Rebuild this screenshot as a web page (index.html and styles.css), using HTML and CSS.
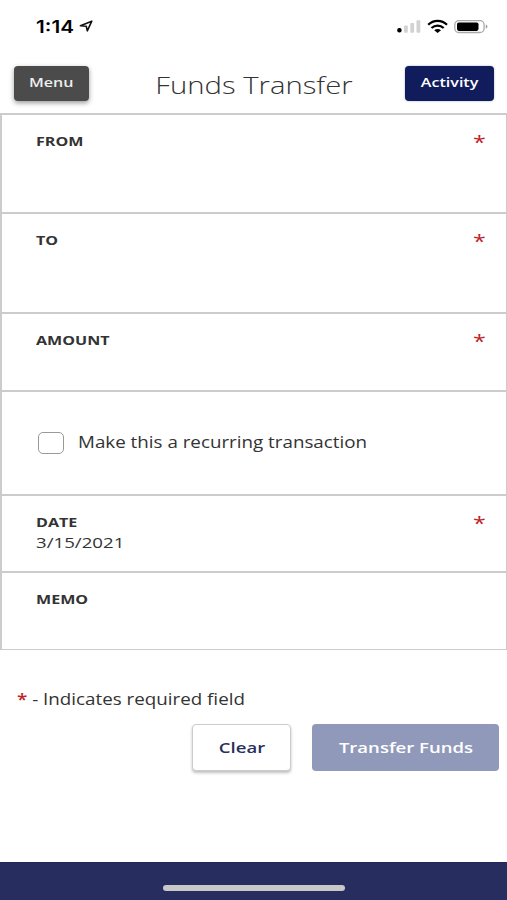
FILE: index.html
```html
<!DOCTYPE html>
<html lang="en">
<head>
<meta charset="utf-8">
<title>Funds Transfer</title>
<link rel="stylesheet" href="styles.css">
</head>
<body>
<div class="status">
  <span class="time wide">1:14</span>
  <svg class="arrow" width="15" height="13" viewBox="0 0 15 13"><path d="M1.400 5.800 12.800 1.200 8.300 10.800 7.300 6.300Z" fill="none" stroke="#111" stroke-width="1.600" stroke-linejoin="round"/></svg>
  <svg class="signals" width="94" height="16" viewBox="0 0 94 16">
    <rect x="2.200" y="9" width="4.400" height="4.600" rx="2" fill="#000"/>
    <g fill="#d2d2d2"><rect x="9" y="6.500" width="3.800" height="7.200" rx="1"/><rect x="15.300" y="4" width="3.800" height="9.700" rx="1"/><rect x="21.500" y="1.200" width="3.800" height="12.500" rx="1"/></g>
    <g fill="none" stroke="#000" stroke-width="2.300"><path d="M33.200 5.800C38.400 .600 46.800 .600 52 5.800"/><path d="M36.500 9C40 5.800 45.200 5.800 48.700 9"/></g>
    <path d="M39.200 11.200C41.200 9.500 44 9.500 46 11.200L42.600 14Z" fill="#000"/>
    <rect x="59.800" y="1.700" width="29.300" height="11.800" rx="4" fill="#fff" stroke="#aaa" stroke-width="1.300"/>
    <rect x="62" y="3.400" width="21.500" height="8.500" rx="1.800" fill="#000"/>
    <path d="M90.800 5.500V9.800Q92.400 9 92.400 7.600T90.800 5.500Z" fill="#999"/>
  </svg>
</div>
<header class="header">
  <button class="btn menu"><span class="wide">Menu</span></button>
  <h1 class="title"><span class="wide">Funds Transfer</span></h1>
  <button class="btn activity"><span class="wide">Activity</span></button>
</header>
<main>
  <div class="form">
    <section class="row from"><div class="label wide">FROM</div><span class="star wide">*</span></section>
    <section class="row to"><div class="label wide">TO</div><span class="star wide">*</span></section>
    <section class="row amount"><div class="label wide">AMOUNT</div><span class="star wide">*</span></section>
    <section class="row recurring"><span class="check"></span><span class="text wide">Make this a recurring transaction</span></section>
    <section class="row date"><div class="field"><div class="label wide">DATE</div><div class="value wide">3/15/2021</div></div><span class="star wide">*</span></section>
    <section class="row memo"><div class="label wide">MEMO</div></section>
  </div>
  <p class="note"><span class="wide"><b>*</b> - Indicates required field</span></p>
  <div class="actions">
    <button class="btn clear"><span class="wide">Clear</span></button>
    <button class="btn transfer"><span class="wide">Transfer Funds</span></button>
  </div>
</main>
<footer class="footer"><div class="home"></div></footer>
</body>
</html>
```
FILE: styles.css
```css
* { box-sizing: border-box; }
body {
  margin: 0;
  width: 507px;
  height: 900px;
  overflow: hidden;
  display: flex;
  flex-direction: column;
  background: #fff;
  color: #333;
  font-family: "Open Sans", sans-serif;
}
.wide {
  display: inline-block;
  white-space: nowrap;
  transform: scaleX(1.22);
  transform-origin: left center;
}
.btn .wide, .title .wide { transform-origin: center; }
.status { height: 66px; padding: 17px 18px 0 36px; display: flex; align-items: flex-start; }
.time { width: 43px; font: 600 17px/21px Inter, sans-serif; color: #000; }
.arrow { margin-top: 3px; }
.signals { margin: 2px 0 0 auto; }
.header { height: 47px; padding: 0 13px 0 14px; display: grid; grid-template-columns: 75px 1fr 89px; align-items: start; }
.btn {
  display: flex;
  justify-content: center;
  align-items: center;
  border: 0;
  padding: 0;
  border-radius: 4px;
  color: #fff;
  font: 600 13.200px/20px "Open Sans", sans-serif;
}
.menu { width: 75px; height: 35px; padding-bottom: 3px; background: #4b4b4b; color: #eee; box-shadow: 0 2px 5px rgba(0,0,0,.4); }
.activity { width: 89px; height: 35px; padding-bottom: 3px; background: #101c5c; box-shadow: 0 0 2px rgba(16,28,92,.4); }
.title { margin: 2px 0 0 13px; font-size: 24px; font-weight: 300; line-height: 34px; text-align: center; }
.form { border: 2px solid #ccc; border-right-width: 1px; border-bottom-width: 1px; height: 537px; display: flex; flex-direction: column; }
.row { display: flex; justify-content: space-between; align-items: flex-start; padding: 16px 23px 0 34px; border-bottom: 2px solid #ccc; }
.from { height: 99px; }
.to { height: 100px; }
.amount { height: 78px; }
.recurring { height: 104px; align-items: center; justify-content: flex-start; padding-top: 0; }
.date { height: 77px; }
.memo { height: 76px; border-bottom: 0; }
.label { font-size: 13.200px; font-weight: 700; line-height: 20px; }
.field { display: flex; flex-direction: column; align-items: flex-start; }
.value { font-size: 15.300px; line-height: 20px; }
.star { color: #bd2426; font-size: 19px; line-height: 23px; font-weight: 500; }
.check { width: 26px; height: 22px; border: 1px solid #999; border-radius: 5px; margin: 0 14px 0 2px; }
.text { font-size: 15.400px; line-height: 22px; }
.note { margin: 38px 0 0 17px; font-size: 15.400px; line-height: 24px; }
.note b { color: #bd2426; font-weight: 600; }
.actions { margin-top: 12px; padding-right: 8px; display: flex; justify-content: flex-end; gap: 20px; }
.actions .btn { height: 47px; font-size: 15.200px; padding-bottom: 2px; }
.actions .clear { width: 99px; margin-right: 1px; border: 1px solid #ccc; background: #fff; color: #29305c; box-shadow: 0 2px 3px rgba(0,0,0,.25); }
.transfer { width: 187px; background: #9099b9; }
.footer { margin-top: auto; height: 38px; background: #282d5f; border-top: 1px solid #20265a; padding-top: 22px; }
.home { width: 182px; height: 6px; margin: 0 auto; border-radius: 3px; background: #c8c8c8; }
```
